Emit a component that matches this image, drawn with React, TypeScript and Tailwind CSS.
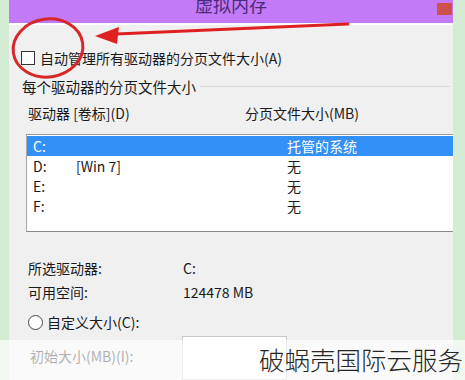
const cjk = "font-['Noto_Sans_CJK_SC','Noto_Sans',sans-serif]";

const rows = [
  { drive: "C:", label: "", size: "托管的系统", selected: true },
  { drive: "D:", label: "[Win 7]", size: "无", selected: false },
  { drive: "E:", label: "", size: "无", selected: false },
  { drive: "F:", label: "", size: "无", selected: false },
];

function Annotations() {
  return (
    <svg
      className="pointer-events-none absolute left-0 top-0"
      width="465"
      height="380"
      viewBox="0 0 465 380"
    >
      <ellipse
        cx="48"
        cy="48"
        rx="35"
        ry="29"
        fill="none"
        stroke="#d8262a"
        strokeWidth="3"
        transform="rotate(-8 48 48)"
      />
      <path d="M348 24 L116 34" stroke="#de2020" strokeWidth="3" strokeLinecap="round" />
      <polygon points="95,36 119,27 117,44" fill="#de2020" />
    </svg>
  );
}

export default function App() {
  return (
    <div className={`relative h-[380px] w-[465px] overflow-hidden bg-[#d3ecd3] pl-[9px] pr-[12px] ${cjk}`}>
      <div className="flex h-full flex-col bg-[#f0f0f0] text-[14px] text-[#1a1a1a]">
        {/* title bar */}
        <div className="relative h-[25px] bg-[#c27af6]">
          <div className="absolute left-0 right-0 top-[-8px] text-center text-[18px] leading-[24px] text-[#4b2a7c]">
            虚拟内存
          </div>
          <div className="absolute right-[1px] top-[3px] h-[12px] w-[15px] bg-[#d2504c]" />
        </div>
        <div className="h-[2px] bg-white" />

        {/* auto manage */}
        <div className="mt-[26px] flex items-center pl-[12px]">
          <div className="h-[14px] w-[14px] border border-[#333] bg-white" />
          <span className="ml-[5px] leading-[14px]">自动管理所有驱动器的分页文件大小(A)</span>
        </div>

        {/* group */}
        <div className="mt-[14px] flex items-center pl-[13px]">
          <span className="text-[14.5px] leading-[16px]">每个驱动器的分页文件大小</span>
          <div className="ml-[4px] mr-[3px] h-px flex-1 bg-[#d8d8d8]" />
        </div>

        <div className="mt-[10px] flex pl-[19px] leading-[16px]">
          <span className="w-[217px]">驱动器 [卷标](D)</span>
          <span>分页文件大小(MB)</span>
        </div>

        {/* list */}
        <div className="ml-[17px] mt-[13px] h-[106px] border-y border-l border-t-[#9a9a9a] border-b-[#8a8a8a] border-l-[#a8a8a8] bg-white pt-[1px]">
          {rows.map((r) => (
            <div
              key={r.drive}
              className={`flex h-[20px] items-center pl-[6px] leading-[20px] ${
                r.selected ? "bg-[#3290f6] text-white" : ""
              }`}
            >
              <span className="w-[43px]">{r.drive}</span>
              <span className="w-[211px]">{r.label}</span>
              <span>{r.size}</span>
            </div>
          ))}
        </div>

        {/* info */}
        <div className="mt-[28px] flex flex-col gap-[8px] pl-[19px] leading-[16px]">
          <div className="flex">
            <span className="w-[155px]">所选驱动器:</span>
            <span>C:</span>
          </div>
          <div className="flex">
            <span className="w-[155px]">可用空间:</span>
            <span>124478 MB</span>
          </div>
        </div>

        <div className="mt-[14px] flex items-center pl-[19px]">
          <div className="h-[15px] w-[15px] rounded-full border border-[#444] bg-white" />
          <span className="ml-[4px] leading-[16px]">自定义大小(C):</span>
        </div>

        <div className="mt-[6px] flex items-start pl-[21px]">
          <span className="mt-[12px] w-[152px] leading-[16px]">初始大小(MB)(I):</span>
          <div className="h-[44px] w-[105px] border border-[#c8c8c8] bg-white" />
        </div>
      </div>

      <Annotations />

      {/* watermark band */}
      <div className="absolute bottom-0 left-0 right-0 h-[40px] bg-white/65" />
      <div className="absolute bottom-[6px] right-[2px] text-[25.5px] font-light leading-[30px] text-[#262626]">
        破蜗壳国际云服务
      </div>
    </div>
  );
}
